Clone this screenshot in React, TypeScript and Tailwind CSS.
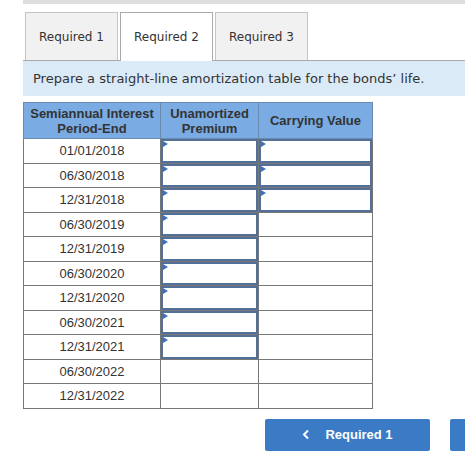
const dates = [
  "01/01/2018",
  "06/30/2018",
  "12/31/2018",
  "06/30/2019",
  "12/31/2019",
  "06/30/2020",
  "12/31/2020",
  "06/30/2021",
  "12/31/2021",
  "06/30/2022",
  "12/31/2022",
];

const InputCell = () => (
  <td className="border border-[#777] p-0">
    <div className="relative h-[23.5px] border-2 border-[#52709a] bg-white">
      <span className="absolute left-0 top-0 h-0 w-0 border-y-[3px] border-l-[5px] border-y-transparent border-l-[#3d72b8]"></span>
    </div>
  </td>
);

const PlainCell = () => (
  <td className="border border-[#777] p-0">
    <div className="h-[23.5px]"></div>
  </td>
);

const App = () => {
  const tabs = ["Required 1", "Required 2", "Required 3"];

  return (
    <div className="w-[465px] h-[455px] overflow-hidden bg-white">
      <div className="ml-[23px] w-[600px]">
        <div className="h-[4px] bg-[#dedede]"></div>

        {/* tabs */}
        <div className="mt-[8px] flex gap-[2px] pl-[2px] font-['DejaVu_Sans',sans-serif] text-[12px] text-[#333]">
          {tabs.map((t, i) => (
            <div
              key={t}
              className={
                i === 1
                  ? "relative z-10 flex h-[49px] w-[93px] items-center justify-center border border-b-0 border-[#aaa] bg-white"
                  : "flex h-[48px] w-[93px] items-center justify-center border border-b-0 border-[#c4c4c4] bg-[#f2f1f1]"
              }
            >
              {t}
            </div>
          ))}
        </div>

        <div className="flex h-[36px] items-center border-t border-[#aaa] bg-[#dbeaf7] pl-[10px] font-['DejaVu_Sans',sans-serif] text-[13px] text-[#333] -mt-px">
          Prepare a straight-line amortization table for the bonds’ life.
        </div>

        <table className="mt-[6px] w-[349px] table-fixed border-collapse font-['Liberation_Sans',Arial,sans-serif] text-[13px] text-[#333]">
          <colgroup>
            <col className="w-[137px]" />
            <col className="w-[98px]" />
            <col className="w-[114px]" />
          </colgroup>
          <thead>
            <tr className="bg-[#7aabe3]">
              <th className="border border-[#6a8bb0] p-0 font-bold leading-[15px]">
                <div className="flex h-[35px] flex-col items-center justify-center">
                  <span>Semiannual Interest</span>
                  <span>Period-End</span>
                </div>
              </th>
              <th className="border border-[#6a8bb0] p-0 font-bold leading-[15px]">
                <div className="flex h-[35px] flex-col items-center justify-center">
                  <span>Unamortized</span>
                  <span>Premium</span>
                </div>
              </th>
              <th className="border border-[#6a8bb0] p-0 font-bold">
                <div className="flex h-[35px] items-center justify-center">
                  Carrying Value
                </div>
              </th>
            </tr>
          </thead>
          <tbody>
            {dates.map((d, i) => (
              <tr key={d}>
                <td className="border border-[#777] p-0">
                  <div className="flex h-[23.5px] items-center justify-center">
                    {d}
                  </div>
                </td>
                {i < 9 ? <InputCell /> : <PlainCell />}
                {i < 3 ? <InputCell /> : <PlainCell />}
              </tr>
            ))}
          </tbody>
        </table>

        {/* nav buttons */}
        <div className="mt-[10px] flex gap-[20px] pl-[242px]">
          <button className="flex h-[32px] w-[165px] items-center justify-center gap-[15px] rounded-[2px] bg-[#3b7bc6] font-['Liberation_Sans',Arial,sans-serif] text-[13px] font-bold text-white">
            <svg width="8" height="11" viewBox="0 0 8 11">
              <path d="M6 1.5 L2 5.5 L6 9.5" stroke="white" strokeWidth="2" fill="none" />
            </svg>
            <span>Required 1</span>
          </button>
          <button className="h-[32px] w-[165px] rounded-[2px] bg-[#3b7bc6]"></button>
        </div>
      </div>
    </div>
  );
};

export default App;
